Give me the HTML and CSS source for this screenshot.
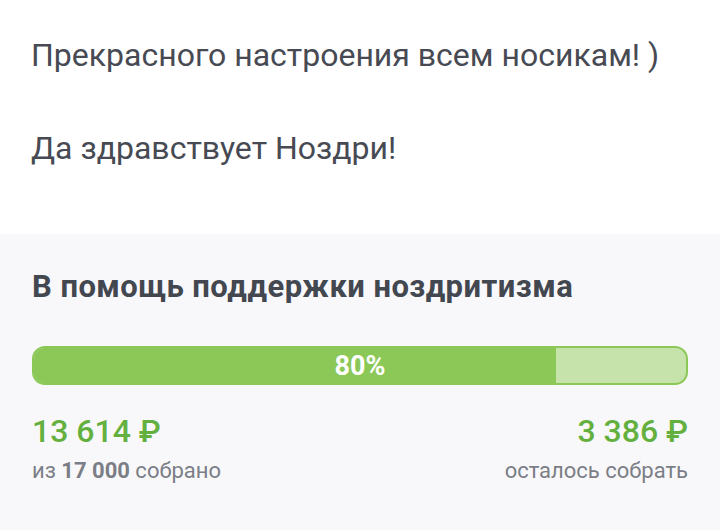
FILE: index.html
```html
<!DOCTYPE html>
<html lang="ru">
<head>
<meta charset="utf-8">
<link rel="stylesheet" href="styles.css">
</head>
<body>
<div class="post">
  <p class="para">Прекрасного настроения всем носикам! )</p>
  <p class="para">Да здравствует Ноздри!</p>
</div>
<div class="fund">
  <h2 class="fund-title">В помощь поддержки ноздритизма</h2>
  <div class="bar">
    <div class="bar-fill" style="width: 80%"></div>
    <span class="bar-label">80%</span>
  </div>
  <div class="stats">
    <div class="stat">
      <div class="amount">13 614 ₽</div>
      <div class="note">из <b>17 000</b> собрано</div>
    </div>
    <div class="stat stat-right">
      <div class="amount">3 386 ₽</div>
      <div class="note">осталось собрать</div>
    </div>
  </div>
</div>
</body>
</html>
```
FILE: styles.css
```css
html, body {
  margin: 0;
  padding: 0;
  background: #ffffff;
  font-family: Roboto, "Noto Sans", sans-serif;
  color: #474a53;
}
.post {
  padding: 36px 32px 67px 31px;
}
.para {
  margin: 0 0 55px 0;
  font-size: 32px;
  line-height: 38px;
}
.para:last-child {
  margin-bottom: 0;
}
.fund {
  background: #f8f8fa;
  padding: 33px 32px 60px 32px;
}
.fund-title {
  margin: 0 0 39px 0;
  font-size: 31px;
  font-weight: 700;
  line-height: 40px;
  color: #434750;
  letter-spacing: 0.45px;
}
.bar {
  position: relative;
  height: 39px;
  box-sizing: border-box;
  border: 2px solid #8bc858;
  border-radius: 13px;
  background: #c5e3ab;
  overflow: hidden;
}
.bar-fill {
  height: 100%;
  background: #8bc858;
}
.bar-label {
  position: absolute;
  inset: 0;
  display: flex;
  align-items: center;
  justify-content: center;
  color: #ffffff;
  font-weight: 700;
  font-size: 27px;
}
.stats {
  display: flex;
  justify-content: space-between;
  margin-top: 28px;
}
.stat-right {
  text-align: right;
}
.amount {
  font-size: 32px;
  font-weight: 500;
  color: #64b03e;
  line-height: 36px;
}
.note {
  margin-top: 8px;
  font-size: 22px;
  line-height: 28px;
  color: #7b7e86;
}
.note b {
  font-weight: 700;
}
```
